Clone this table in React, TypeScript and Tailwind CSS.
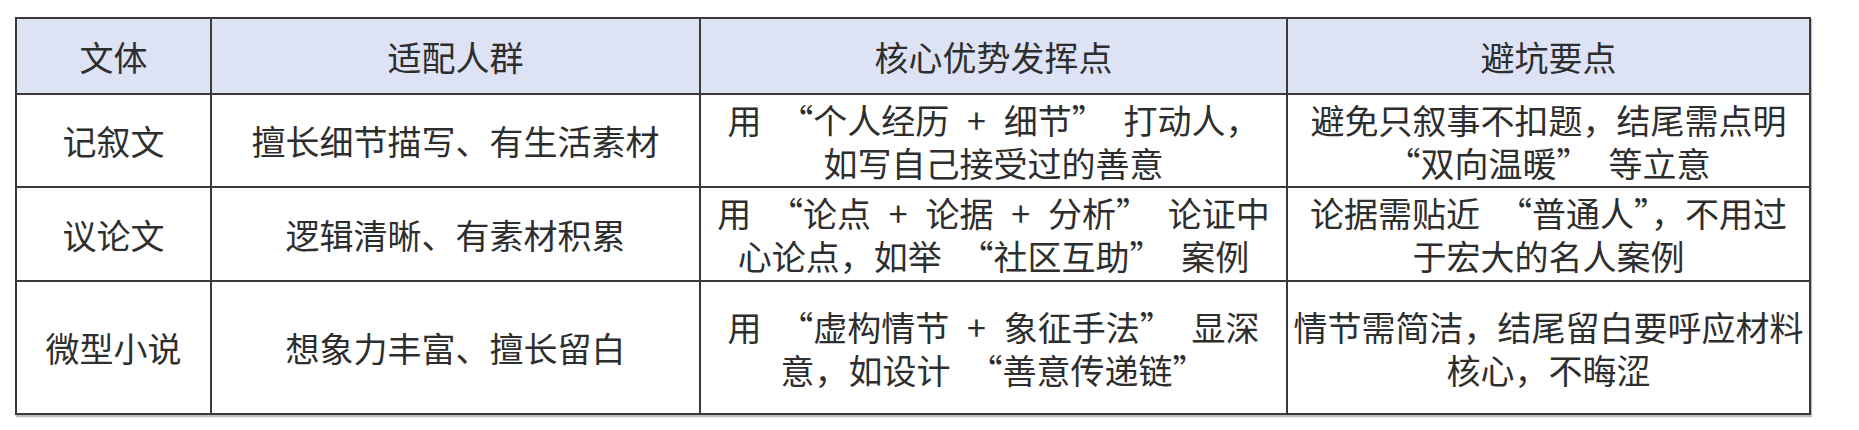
import React from 'react';

type Row = {
  genre: string;
  fit: string;
  adv: string[];
  avoid: string[];
  h: string;
};

const rows: Row[] = [
  {
    genre: '记叙文',
    fit: '擅长细节描写、有生活素材',
    adv: ['用 “个人经历 + 细节” 打动人，', '如写自己接受过的善意'],
    avoid: ['避免只叙事不扣题，结尾需点明', '“双向温暖” 等立意'],
    h: 'h-[93px]',
  },
  {
    genre: '议论文',
    fit: '逻辑清晰、有素材积累',
    adv: ['用 “论点 + 论据 + 分析” 论证中', '心论点，如举 “社区互助” 案例'],
    avoid: ['论据需贴近 “普通人”，不用过', '于宏大的名人案例'],
    h: 'h-[94px]',
  },
  {
    genre: '微型小说',
    fit: '想象力丰富、擅长留白',
    adv: ['用 “虚构情节 + 象征手法” 显深', '意，如设计 “善意传递链”'],
    avoid: ['情节需简洁，结尾留白要呼应材料', '核心，不晦涩'],
    h: 'h-[133px]',
  },
];

const cell = 'border-2 border-[#3a3a3a] px-1 text-center align-middle';

const Lines = ({ lines }: { lines: string[] }) => (
  <>
    {lines.map((line, i) => (
      <div key={i} className="whitespace-nowrap">
        {line}
      </div>
    ))}
  </>
);

export default function App() {
  return (
    <div
      lang="zh-CN"
      className="w-[1859px] h-[430px] bg-white pt-[17px] pl-[15px] font-['Noto_Sans_CJK_SC','Liberation_Sans',sans-serif] text-[34px] leading-[43px] text-[#2e2e2e] [word-spacing:0.3em]"
    >
      <table className="w-[1794px] table-fixed border-collapse shadow-[1px_2px_1px_rgba(0,0,0,0.25)]">
        <colgroup>
          <col className="w-[195px]" />
          <col className="w-[489px]" />
          <col className="w-[587px]" />
          <col className="w-[523px]" />
        </colgroup>
        <thead>
          <tr className="h-[76px] bg-[#dde3f4]">
            <th className={`${cell} font-normal`}>文体</th>
            <th className={`${cell} font-normal`}>适配人群</th>
            <th className={`${cell} font-normal`}>核心优势发挥点</th>
            <th className={`${cell} font-normal`}>避坑要点</th>
          </tr>
        </thead>
        <tbody>
          {rows.map((r) => (
            <tr key={r.genre} className={r.h}>
              <td className={cell}>{r.genre}</td>
              <td className={cell}>{r.fit}</td>
              <td className={cell}>
                <Lines lines={r.adv} />
              </td>
              <td className={cell}>
                <Lines lines={r.avoid} />
              </td>
            </tr>
          ))}
        </tbody>
      </table>
    </div>
  );
}
